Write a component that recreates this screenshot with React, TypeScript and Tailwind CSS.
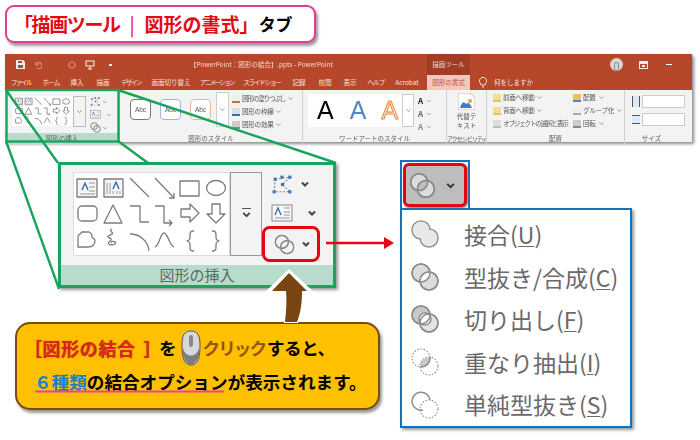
import React from "react";

const FONT = '"Noto Sans CJK JP", "Noto Sans", sans-serif';
const S = "#7c7c7c";

function Gallery({ w, h }: { w: number; h: number }) {
  return (
    <svg width={w} height={h} viewBox="0 0 155 82" fill="none" stroke={S} strokeWidth={w < 100 ? 2.2 : 1.3} strokeLinejoin="round">
      <rect x="3" y="6" width="20" height="18" fill="#f5f5f5" />
      <path d="M15 10h6M15 14h6M15 18h6M6 21h15" stroke="#999" strokeWidth="1" />
      <path d="M8 17l3-7 3 7" stroke="#2f6db5" strokeWidth="1.4" />
      <rect x="30" y="6" width="19" height="18" fill="#f5f5f5" />
      <path d="M33 10v11M36 10v11M39 18v3M43 18v3M46 18v3" stroke="#999" strokeWidth="1" />
      <path d="M39 16l3-7 3 7" stroke="#2f6db5" strokeWidth="1.4" />
      <path d="M56 5l19 19" />
      <path d="M81 5l19 20M95 25h5v-5" />
      <rect x="106" y="8" width="19" height="15" />
      <ellipse cx="142" cy="15" rx="9.5" ry="7.5" />
      <rect x="4" y="33" width="19" height="15" rx="4" />
      <path d="M30 50l9-18 9 18z" />
      <path d="M56 33h10v16h9" />
      <path d="M81 33h9v17h8M95 47l3 3-3 3" />
      <path d="M107 36h9v-5l9 9-9 9v-5h-9z" />
      <path d="M138 31h8v10h5l-9 9-9-9h5z" />
      <path d="M4 74V63l4-4h7c3 1 3 3 3 5l3 3c0 4-2 7-7 7z" />
      <path d="M38 56c-5 2 5 4-2 6s5 3 0 6 2 5 5 3-4-4-4-1" />
      <path d="M56 61c10 0 18 7 19 17" />
      <path d="M81 74c5-2 5-14 9-14s5 12 10 14" />
      <path d="M120 58h-1c-3 0-3 2-3 5s0 4-3 5c3 1 3 2 3 5s0 5 3 5h1" />
      <path d="M138 58h1c3 0 3 2 3 5s0 4 3 5c-3 1-3 2-3 5s0 5-3 5h-1" />
    </svg>
  );
}

function EditPoints({ s }: { s: number }) {
  return (
    <svg width={s} height={s} viewBox="0 0 22 22" fill="none" stroke="#8a8a8a" strokeWidth="1" strokeDasharray="2 1.5">
      <path d="M4 6l14-2-7 7 7 7H3z" />
      <g fill="#3f74b5" stroke="none">
        <rect x="2.5" y="4.5" width="3" height="3" />
        <rect x="9" y="2.5" width="3" height="3" />
        <rect x="16.5" y="2.5" width="3" height="3" />
        <rect x="9.5" y="9.5" width="3" height="3" />
        <rect x="1.5" y="16.5" width="3" height="3" />
        <rect x="16.5" y="16.5" width="3" height="3" />
      </g>
    </svg>
  );
}

function TextBoxIcon({ w, h }: { w: number; h: number }) {
  return (
    <svg width={w} height={h} viewBox="0 0 22 18" fill="#f7f7f7" stroke="#8a8a8a" strokeWidth="1">
      <rect x="1" y="1" width="20" height="16" />
      <path d="M4 11l3-7 3 7" stroke="#2f6db5" strokeWidth="1.3" fill="none" />
      <path d="M13 4h6M13 8h6M13 11h6M4 14h15" fill="none" stroke="#999" />
    </svg>
  );
}

function Merge({ s, fill = "none", id }: { s: number; fill?: string; id?: string }) {
  return (
    <svg width={s} height={s} viewBox="0 0 24 24" fill="none" stroke="#8a8a8a" strokeWidth="1.4">
      {id && (
        <defs>
          <clipPath id={id}><circle cx="15" cy="15" r="7.5" /></clipPath>
        </defs>
      )}
      <circle cx="9" cy="9" r="7.5" fill={fill} />
      <circle cx="15" cy="15" r="7.5" fill={fill} />
      {id && <circle cx="9" cy="9" r="7.5" fill="#bdbdbd" stroke="none" clipPath={`url(#${id})`} />}
      <circle cx="9" cy="9" r="7.5" />
      <circle cx="15" cy="15" r="7.5" />
    </svg>
  );
}

function Chevron({ s = 10, c = "#444", w = 2 }: { s?: number; c?: string; w?: number }) {
  return (
    <svg width={s} height={s} viewBox="0 0 10 10" fill="none" stroke={c} strokeWidth={w}>
      <path d="M2 3.5l3 3 3-3" />
    </svg>
  );
}

function Group({ w, label, children, tint, narrow }: { w: string; label: string; children: React.ReactNode; tint?: boolean; narrow?: boolean }) {
  return (
    <div className={`${w} flex flex-col border-r border-[#d0d0d0]`}>
      <div className="flex-1 flex min-h-0">{children}</div>
      <div className={`h-[11px] text-center leading-[11px] text-[#606060] whitespace-nowrap ${narrow ? "text-[6px] tracking-[-1px]" : "text-[6.5px]"} ${tint ? "bg-[#b8dccb]" : ""}`}>{label}</div>
    </div>
  );
}

function MiniRow({ icon, text, arrow = true, tight }: { icon: React.ReactNode; text: string; arrow?: boolean; tight?: boolean }) {
  return (
    <div className={`flex items-center gap-[2px] h-[13px] text-[6.6px] text-[#555] whitespace-nowrap ${tight ? "tracking-[-1.2px]" : "tracking-[-0.3px]"}`}>
      {icon}
      <span>{text}</span>
      {arrow && <Chevron s={7} c="#777" w={1} />}
    </div>
  );
}

function Sq({ c, c2 = "#aaa" }: { c: string; c2?: string }) {
  return <span className="inline-block w-[8px] h-[8px] border-b-2 shrink-0" style={{ background: c2, borderColor: c }} />;
}

function Abc({ c }: { c: string }) {
  return (
    <div className="w-[21px] h-[21px] rounded-[4px] border bg-white text-[6.5px] flex items-center justify-center text-[#555]" style={{ borderColor: c, fontFamily: '"Liberation Sans"' }}>
      Abc
    </div>
  );
}

function Ribbon() {
  const tabs: [string, string][] = [
    ["ファイル", "w-[30px] tracking-[-1.5px]"],
    ["ホーム", "w-[30px] tracking-[-0.8px]"],
    ["挿入", "w-[22px]"],
    ["描画", "w-[30px]"],
    ["デザイン", "w-[26px] tracking-[-1.5px]"],
    ["画面切り替え", "w-[54px]"],
    ["アニメーション", "w-[38px] tracking-[-1.6px]"],
    ["スライド ショー", "w-[52px] tracking-[-1.2px]"],
    ["記録", "w-[22px]"],
    ["校閲", "w-[30px]"],
    ["表示", "w-[20px]"],
    ["ヘルプ", "w-[32px] tracking-[-0.8px]"],
    ["Acrobat", "w-[30px]"],
  ];
  return (
    <div className="w-[687px] h-[88px] ml-[5px] mt-[11px] bg-[#f3f3f3] shadow-[2px_2px_3px_#8a8a8a] flex flex-col blur-[0.35px]">
      <div className="h-[21px] bg-[#b7472a] flex items-center text-[#f3d9d2] text-[6.5px] relative">
        <div className="flex items-center gap-[9px] pl-[11px] w-[183px]">
          <svg width="9" height="9" viewBox="0 0 9 9" fill="#eee"><path d="M0 0h7l2 2v7H0zM2 1v2h4V1zM2 5v3h5V5z" fillRule="evenodd" /></svg>
          <svg width="8" height="8" viewBox="0 0 8 8" fill="none" stroke="#d98e7a" strokeWidth="1.2"><path d="M2 1v3h3M2 4a3 3 0 1 1 1 3" /></svg>
          <span className="w-[8px]" />
          <svg width="8" height="8" viewBox="0 0 8 8" fill="none" stroke="#d98e7a" strokeWidth="1.2"><circle cx="4" cy="4" r="3" /></svg>
          <svg width="10" height="10" viewBox="0 0 10 10" fill="none" stroke="#eee" strokeWidth="1.1"><path d="M1 1h8v5H1zM5 6v3M3 9h4" /></svg>
          <span className="w-[3px] h-[2px] bg-[#eee] ml-[5px]" />
        </div>
        <div className="w-[239px] whitespace-nowrap pl-[2px]">【PowerPoint：図形の結合】.pptx  -  PowerPoint</div>
        <div className="w-[43px] h-[21px] bg-[#a03d24] text-center leading-[21px] whitespace-nowrap">描画ツール</div>
        <div className="flex-1 flex items-center justify-end gap-[16px] pr-[20px]">
          <div className="w-[13px] h-[13px] rounded-full bg-[#d8d4d3] flex items-end justify-center overflow-hidden">
            <span className="w-[5px] h-[9px] rounded-full border border-[#888]" />
          </div>
          <svg width="9" height="8" viewBox="0 0 9 8" fill="#eee"><path d="M0 0h9v8H0zM1 3v4h7V3z" fillRule="evenodd" /><path d="M3 4h3v2H3z" /></svg>
          <span className="w-[6px] h-[1px] bg-white ml-[2px]" />
        </div>
      </div>
      <div className="h-[15px] bg-[#b7472a] flex items-center pl-[1px] text-[6.5px] text-[#f6e4df]">
        {tabs.map(([t, w]) => (
          <div key={t} className={`${w} text-center whitespace-nowrap`}>{t}</div>
        ))}
        <div className="w-[43px] h-[15px] ml-[5px] bg-[#f3c7bc] text-[#c0503a] text-center leading-[15px] whitespace-nowrap">図形の書式</div>
        <svg className="ml-[8px]" width="10" height="11" viewBox="0 0 10 11" fill="none" stroke="#f6e4df"><path d="M3 7a3.6 3.6 0 1 1 4 0v1H3zM4 10h2" /></svg>
        <span className="ml-[6px]">何をしますか</span>
      </div>
      <div className="flex-1 flex">
        <Group w="w-[115px]" label="図形の挿入" tint>
          <div className="flex items-start pt-[6px] pl-[7px] w-full">
            <div className="bg-white h-[30px]"><Gallery w={61} h={30} /></div>
            <div className="w-[13px] h-[31px] border border-[#bbb] flex items-center justify-center"><Chevron s={7} c="#777" w={1} /></div>
            <div className="flex flex-col pl-[4px] gap-[3px]">
              <div className="flex items-center gap-[1px]"><EditPoints s={11} /><Chevron s={6} c="#777" w={1} /></div>
              <div className="flex items-center gap-[5px]"><TextBoxIcon w={11} h={9} /><Chevron s={6} c="#777" w={1} /></div>
              <div className="flex items-center gap-[1px]"><Merge s={11} /><Chevron s={6} c="#777" w={1} /></div>
            </div>
          </div>
        </Group>
        <Group w="w-[183px]" label="図形のスタイル">
          <div className="flex items-start pl-[10px] pt-[9px] gap-[9px]">
            <Abc c="#777" />
            <Abc c="#9db4dc" />
            <Abc c="#e8b896" />
            <div className="-mt-[7px] w-[13px] h-[35px] border border-[#ccc] bg-white flex items-center justify-center -ml-[4px]"><Chevron s={7} c="#777" w={1} /></div>
            <div className="flex flex-col -mt-[7px] -ml-[6px]">
              <MiniRow icon={<Sq c="#d9682c" c2="#eee" />} text="図形の塗りつぶし" tight />
              <MiniRow icon={<Sq c="#3a6db5" c2="#ddd" />} text="図形の枠線" />
              <MiniRow icon={<Sq c="#888" c2="#ccc" />} text="図形の効果" />
            </div>
          </div>
        </Group>
        <Group w="w-[144px]" label="ワードアートのスタイル">
          <div className="flex items-start pl-[5px] pt-[4px]">
            <div className="w-[94px] h-[33px] bg-white flex items-center text-[25px] leading-none" style={{ fontFamily: '"Liberation Sans"' }}>
              <span className="ml-[9px] text-black">A</span>
              <span className="ml-[16px] text-[#4f86c6]">A</span>
              <span className="ml-[15px] text-[#fbe3d0] [-webkit-text-stroke:1px_#ee8a3e]">A</span>
            </div>
            <div className="w-[12px] h-[33px] border border-[#ccc] bg-white flex items-center justify-center"><Chevron s={7} c="#777" w={1} /></div>
            <div className="flex flex-col pl-[4px] text-[8px] font-bold leading-[13px]">
              <span className="flex items-center gap-[3px] text-[#222]">A<Chevron s={6} c="#777" w={1} /></span>
              <span className="flex items-center gap-[3px] text-[#666]">A<Chevron s={6} c="#777" w={1} /></span>
              <span className="flex items-center gap-[3px] text-[#6d8fc8]">A<Chevron s={6} c="#777" w={1} /></span>
            </div>
          </div>
        </Group>
        <Group w="w-[40px]" label="アクセシビリティ" narrow>
          <div className="flex flex-col items-center w-full pt-[3px] text-[6.5px] leading-[9px] text-[#555]">
            <svg width="17" height="17" viewBox="0 0 17 17"><path d="M0 0h12l5 5v12H0z" fill="#fff" stroke="#bbb" /><path d="M2 15c2-6 4-7 6-4 2-2 4-1 6 4z" fill="#3d7fc4" /><circle cx="12" cy="8" r="2" fill="#f0a030" /></svg>
            <span className="mt-[2px]">代替テ</span>
            <span>キスト</span>
          </div>
        </Group>
        <Group w="w-[138px]" label="配置">
          <div className="flex pl-[6px] pt-[1px]">
            <div className="flex flex-col w-[80px]">
              <MiniRow icon={<Sq c="#e8c25a" c2="#f3dc9a" />} text="前面へ移動" />
              <MiniRow icon={<Sq c="#e8c25a" c2="#f3dc9a" />} text="背面へ移動" />
              <MiniRow icon={<Sq c="#bbb" c2="#ddd" />} text="オブジェクトの選択と表示" arrow={false} tight />
            </div>
            <div className="flex flex-col">
              <MiniRow icon={<Sq c="#4f86c6" c2="#e8c25a" />} text="配置" />
              <MiniRow icon={<Sq c="#aaa" c2="#eee" />} text="グループ化" />
              <MiniRow icon={<Sq c="#888" c2="#ccc" />} text="回転" />
            </div>
          </div>
        </Group>
        <div className="flex-1 flex flex-col">
          <div className="flex-1 flex flex-col pt-[5px] pl-[7px] gap-[5px]">
            <div className="flex items-center gap-[2px]"><span className="w-[8px] h-[11px] border-x border-[#555] bg-[#dfe8f5]" /><span className="w-[43px] h-[13px] border border-[#ccc] bg-white" /></div>
            <div className="flex items-center gap-[2px]"><span className="w-[8px] h-[9px] border-y border-[#555] bg-[#dfe8f5]" /><span className="w-[43px] h-[13px] border border-[#ccc] bg-white" /></div>
          </div>
          <div className="h-[11px] text-center text-[6.5px] leading-[11px] text-[#606060] pr-[14px]">サイズ</div>
        </div>
      </div>
    </div>
  );
}

function BigPanel() {
  return (
    <div className="w-[278px] h-[126px] ml-[58px] mt-[20px] border-[3px] border-[#17a45b] bg-[#f3f3f3] flex flex-col shadow-[2px_2px_3px_#999]">
      <div className="flex-1 flex items-start pl-[12px] pt-[7px]">
        <div className="bg-white border border-[#ddd]"><Gallery w={155} h={82} /></div>
        <div className="w-[32px] h-[84px] border border-[#999] flex flex-col items-center justify-center">
          <span className="w-[9px] h-[1.5px] bg-[#555]" />
          <Chevron s={11} c="#444" w={1.6} />
        </div>
        <div className="flex flex-col pl-[9px] gap-[8px] pt-[1px]">
          <div className="flex items-center gap-[6px] h-[22px]"><EditPoints s={23} /><Chevron s={10} /></div>
          <div className="flex items-center gap-[14px] h-[20px]"><TextBoxIcon w={22} h={18} /><Chevron s={10} /></div>
          <div className="flex items-center gap-[6px] h-[22px] ml-[3px] mt-[2px]"><Merge s={21} /><Chevron s={10} /></div>
        </div>
      </div>
      <div className="h-[20px] bg-[#b8dccb] text-center text-[15px] leading-[20px] text-[#5a6a62]">図形の挿入</div>
    </div>
  );
}

function MenuIcon({ k }: { k: number }) {
  const gray = "#8e8e8e";
  return (
    <svg width="28" height="28" viewBox="0 0 28 28" fill="none" stroke={gray} strokeWidth="1.5">
      <defs>
        <clipPath id={`c${k}`}><circle cx="18" cy="18" r="9" /></clipPath>
      </defs>
      {k === 0 && (
        <>
          <circle cx="10" cy="10" r="9" />
          <circle cx="18" cy="18" r="9" />
          <circle cx="10" cy="10" r="8.2" fill="#e8e8e8" stroke="none" />
          <circle cx="18" cy="18" r="8.2" fill="#e8e8e8" stroke="none" />
        </>
      )}
      {k === 1 && (
        <>
          <circle cx="10" cy="10" r="9" fill="#dcdcdc" />
          <circle cx="18" cy="18" r="9" fill="#dcdcdc" />
          <circle cx="10" cy="10" r="9" fill="#fff" clipPath={`url(#c${k})`} stroke="none" />
          <circle cx="10" cy="10" r="9" />
          <circle cx="18" cy="18" r="9" />
        </>
      )}
      {k === 2 && (
        <>
          <circle cx="10" cy="10" r="9" fill="#c8c8c8" />
          <circle cx="18" cy="18" r="9" fill="#e3e3e3" />
          <circle cx="14" cy="14" r="6" fill="#fff" />
          <circle cx="10" cy="10" r="9" />
          <circle cx="18" cy="18" r="9" />
        </>
      )}
      {k === 3 && (
        <>
          <circle cx="10" cy="10" r="9" strokeDasharray="1.6 1.6" strokeWidth="1.1" />
          <circle cx="18" cy="18" r="9" strokeDasharray="1.6 1.6" strokeWidth="1.1" />
          <circle cx="10" cy="10" r="9" fill="#c9c9c9" clipPath={`url(#c${k})`} />
        </>
      )}
      {k === 4 && (
        <>
          <path d="M12 19A9 9 0 1 1 19 9" />
          <circle cx="18" cy="18" r="9" strokeDasharray="1.6 1.6" strokeWidth="1.1" />
        </>
      )}
    </svg>
  );
}

function Menu() {
  const items: [string, string, string][] = [
    ["接合(", "U", ")"],
    ["型抜き/合成(", "C", ")"],
    ["切り出し(", "F", ")"],
    ["重なり抽出(", "I", ")"],
    ["単純型抜き(", "S", ")"],
  ];
  return (
    <div className="ml-[5px] mt-[18px] w-[232px]">
      <div className="w-[70px] h-[48px] border-[2px] border-b-0 border-[#1271b8] p-[1px]">
        <div className="w-full h-full rounded-[6px] border-[3px] border-[#e30613] bg-[#bdbdbd] flex items-center pl-[3px] gap-[9px] shadow-[1px_1px_2px_#777]">
          <Merge s={27} fill="#dcdcdc" id="topm" />
          <Chevron s={11} c="#333" w={1.8} />
        </div>
      </div>
      <div className="w-[232px] h-[220px] border-[2px] border-[#1271b8] bg-white shadow-[2px_2px_3px_#999] flex flex-col pl-[9px] pt-[3px]">
        {items.map(([a, b, c], i) => (
          <div key={a} className="h-[42.6px] flex items-center text-[23px] text-[#6a6a6a] whitespace-nowrap">
            <span className="w-[53px]"><MenuIcon k={i} /></span>
            <span>{a}<span className="underline decoration-1 underline-offset-2">{b}</span>{c}</span>
          </div>
        ))}
      </div>
    </div>
  );
}

function MouseIcon() {
  return (
    <svg className="-my-[4px]" width="22" height="36" viewBox="0 0 22 36">
      <path d="M11 1c7 0 9 5 9 14 0 10-1 20-9 20S2 25 2 15C2 6 4 1 11 1z" fill="#d8d8d8" stroke="#555" />
      <path d="M3 18c-1 6 1 15 8 17 7-2 9-11 8-17-2 10-14 10-16 0z" fill="#7d7d7d" />
      <rect x="9" y="5" width="4" height="12" rx="2" fill="#8a8a8a" />
    </svg>
  );
}

function Callout() {
  return (
    <div className="w-[365px] h-[88px] ml-[15px] mt-[34px] rounded-[15px] border-[2px] border-[#7a4a12] bg-[#ffc000] shadow-[2px_3px_3px_#999] pl-[17px] pt-[7px] text-[17.6px] font-bold text-black leading-[32px]">
      <div className="flex items-center h-[34px] whitespace-nowrap">
        <span className="text-[#e0261a] text-[18px] tracking-[0.6px] [text-shadow:0_0_1px_#8a2a10] -ml-[10px] w-[129px]">［図形の結合<span className="ml-[8px] tracking-[-8px]">］</span></span>
        <span className="ml-[6px]">を</span>
        <span className="ml-[3px]"><MouseIcon /></span>
        <span className="text-[#96540f] tracking-[-2px] ml-[1px]">クリック</span>
        <span className="tracking-[-0.5px] ml-[2px]">すると、</span>
      </div>
      <div className="whitespace-nowrap h-[30px] mt-[1px]">
        <span className="text-[#1b7fc4]">６種類</span>
        <span>の結合オプション</span>
        <span>が表示されます。</span>
      </div>
    </div>
  );
}

function Overlay() {
  return (
    <svg className="absolute left-0 top-0 pointer-events-none" width="700" height="440" viewBox="0 0 700 440" fill="none">
      <g stroke="#17a45b" strokeWidth="2.4">
        <rect x="6.5" y="90" width="112" height="51.5" />
        <path d="M6 90L58 163M118 90L336 163M118 141L148 163M6 141L59 289" />
      </g>
      <rect x="263.5" y="227.5" width="55" height="33" rx="6" stroke="#e30613" strokeWidth="3" />
      <path d="M326 243H384" stroke="#e30613" strokeWidth="2.5" />
      <path d="M384 237l10 6-10 6z" fill="#e30613" />
      <path d="M289 269l26 24h-11c0 11-1 21-6 30h-14c1-10 1-20 0-30h-20z" fill="#fff" />
      <path d="M289 273l18 18h-5c0 11-1 21-5 31h-12c1-10 2-20 1-31h-14z" fill="#7a4410" />
      <path d="M35 391.5H224" stroke="#ef3fa4" strokeWidth="2" />
    </svg>
  );
}

export default function App() {
  return (
    <div className="relative w-[700px] h-[440px] bg-white overflow-hidden pt-[5px]" style={{ fontFamily: FONT }}>
      <div className="w-[311px] h-[38px] ml-[5px] rounded-[9px] border-[2px] border-[#e6399b] bg-white shadow-[2px_3px_3px_#999] flex items-center pl-[7px] font-bold whitespace-nowrap">
        <span className="text-[19px] text-[#e30a17] tracking-[-1.4px]">「描画ツール</span>
        <span className="text-[19px] text-[#e30a17] w-[25px] text-center font-normal">|</span>
        <span className="text-[19px] text-[#e30a17]">図形の書式」</span>
        <span className="text-[17px] text-black">タブ</span>
      </div>
      <Ribbon />
      <div className="flex">
        <div className="w-[395px]">
          <BigPanel />
          <Callout />
        </div>
        <Menu />
      </div>
      <Overlay />
    </div>
  );
}
